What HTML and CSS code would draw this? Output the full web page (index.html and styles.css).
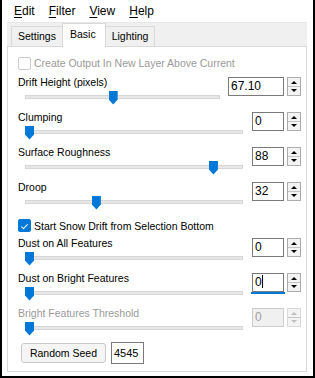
FILE: index.html
```html
<!DOCTYPE html>
<html lang="en">
<head>
  <meta charset="UTF-8" />
  <title>Snow Drift</title>
  <link rel="stylesheet" href="styles.css">
</head>
<body>
  <div class="window">

    <!-- Menu bar -->
    <div class="menubar">
      <span><u>E</u>dit</span>
      <span><u>F</u>ilter</span>
      <span><u>V</u>iew</span>
      <span><u>H</u>elp</span>
    </div>

    <!-- Tabs -->
    <div class="tabs">
      <div class="tab">Settings</div>
      <div class="tab active">Basic</div>
      <div class="tab">Lighting</div>
    </div>

    <div class="panel">
      <label class="check disabled"><span class="box"></span>Create Output In New Layer Above Current</label>

      <div class="row wide">
        <div class="label">Drift Height (pixels)</div>
        <div class="num"><span class="field">67.10</span><span class="spin"><i class="up"></i><i class="down"></i></span></div>
        <div class="slider"><div class="range"><span class="thumb" style="left: 45%"></span></div></div>
      </div>

      <div class="row">
        <div class="label">Clumping</div>
        <div class="num"><span class="field">0</span><span class="spin"><i class="up"></i><i class="down"></i></span></div>
        <div class="slider"><div class="range"><span class="thumb" style="left: 0%"></span></div></div>
      </div>

      <div class="row">
        <div class="label">Surface Roughness</div>
        <div class="num"><span class="field">88</span><span class="spin"><i class="up"></i><i class="down"></i></span></div>
        <div class="slider"><div class="range"><span class="thumb" style="left: 88%"></span></div></div>
      </div>

      <div class="row">
        <div class="label">Droop</div>
        <div class="num"><span class="field">32</span><span class="spin"><i class="up"></i><i class="down"></i></span></div>
        <div class="slider"><div class="range"><span class="thumb" style="left: 32%"></span></div></div>
      </div>

      <label class="check on">
        <span class="box">
          <svg width="13" height="13" viewBox="0 0 13 13"><path d="M2.8 6.6 L5.3 9 L10.2 4" fill="none" stroke="#fff" stroke-width="1.2"/></svg>
        </span>Start Snow Drift from Selection Bottom
      </label>

      <div class="row">
        <div class="label">Dust on All Features</div>
        <div class="num"><span class="field">0</span><span class="spin"><i class="up"></i><i class="down"></i></span></div>
        <div class="slider"><div class="range"><span class="thumb" style="left: 0%"></span></div></div>
      </div>

      <div class="row">
        <div class="label">Dust on Bright Features</div>
        <div class="num"><span class="field focus">0<span class="caret"></span></span><span class="spin"><i class="up"></i><i class="down"></i></span></div>
        <div class="slider"><div class="range"><span class="thumb" style="left: 0%"></span></div></div>
      </div>

      <div class="row off">
        <div class="label">Bright Features Threshold</div>
        <div class="num"><span class="field">0</span><span class="spin"><i class="up"></i><i class="down"></i></span></div>
        <div class="slider"><div class="range"><span class="thumb" style="left: 0%"></span></div></div>
      </div>

      <div class="seed">
        <button class="btn">Random Seed</button>
        <span class="seed-box">4545</span>
      </div>
    </div>
  </div>
</body>
</html>
```

FILE: styles.css
```css
/* ---------- Window frame ---------- */
body {
  margin: 0;
  font-family: "Liberation Sans", Arial, sans-serif;
  font-size: 10.5px;
  color: #000;
  background: #fff;
}

.window {
  width: 315px;
  height: 378px;
  box-sizing: border-box;
  border: 2px solid #000;
  border-top: none;
  background: #fff;
  padding: 0 6px 0 5px;
  overflow: hidden;
}

/* ---------- Menu ---------- */
.menubar {
  display: flex;
  gap: 14px;
  height: 22px;
  align-items: center;
  padding-left: 7px;
  font-size: 12px;
}
.menubar u { text-decoration-thickness: 1px; text-underline-offset: 2px; }

/* ---------- Tabs ---------- */
.tabs {
  display: flex;
  align-items: flex-end;
  height: 24px;
  background: #f0f0f0;
  border-top: 1px solid #e6e6e6;
  box-sizing: border-box;
  padding-left: 4px;
}
.tab {
  height: 19px;
  line-height: 19px;
  padding: 0 6px;
  border: 1px solid #d9d9d9;
  border-bottom: none;
  margin-right: -1px;
  background: #f0f0f0;
}
.tab.active {
  height: 23px;
  line-height: 20px;
  background: #fff;
  position: relative;
  z-index: 1;
  margin-bottom: -1px;
  padding: 0 9px 0 7px;
}

/* ---------- Tab page ---------- */
.panel {
  height: 326px;
  box-sizing: border-box;
  border: 1px solid #d9d9d9;
  padding: 8px 5px 0 10px;
}

.check {
  display: flex;
  align-items: center;
  gap: 3px;
  height: 16px;
}
.check .box {
  width: 13px;
  height: 13px;
  box-sizing: border-box;
  border: 1px solid #333;
  border-radius: 2px;
  display: flex;
}
.check.disabled { color: #9a9a9a; margin-bottom: 3.5px; }
.check.disabled .box { border-color: #cccccc; }
.check.on { margin: 3px 0 2px; }
.check.on .box { background: #0078d7; border-color: #0078d7; }

/* ---------- Slider rows ---------- */
.row {
  display: grid;
  grid-template-columns: 1fr 49px;
  grid-template-rows: 15px 20px;
  height: 35px;
}
.row .label {
  line-height: 15px;
}
.row .num {
  grid-column: 2;
  grid-row: 1 / 3;
  display: flex;
  gap: 3px;
  margin-top: 2.5px;
  height: 19px;
}
.row.wide { grid-template-columns: 1fr 73px; }
.row.wide .field { width: 56px; }
.row.wide .slider { margin-right: 8px; }

.field {
  width: 32px;
  height: 19px;
  box-sizing: border-box;
  border: 1px solid #7a7a7a;
  padding-left: 2px;
  font-size: 12px;
  line-height: 17px;
  background: #fff;
  position: relative;
}
.field.focus::after {
  content: "";
  position: absolute;
  left: -2px;
  right: -2px;
  bottom: -3px;
  height: 2px;
  background: #0078d7;
}
.caret {
  display: inline-block;
  width: 1px;
  height: 13px;
  background: #000;
  vertical-align: -2px;
}

.spin {
  width: 14px;
  height: 19px;
  box-sizing: border-box;
  border: 1px solid #adadad;
  display: flex;
  flex-direction: column;
  background: #f3f3f3;
}
.spin i {
  flex: 1;
  position: relative;
}
.spin i + i { border-top: 1px solid #c4c4c4; }
.spin i::after {
  content: "";
  position: absolute;
  left: 3px;
  top: 3px;
  border-left: 3px solid transparent;
  border-right: 3px solid transparent;
}
.spin .up::after { border-bottom: 3px solid #000; }
.spin .down::after { border-top: 3px solid #000; top: 2px; }

.slider {
  grid-row: 2;
  position: relative;
  margin: 5px 9px 0 7px;
  height: 4px;
  background: #e7e7e7;
  border: 1px solid #d6d6d6;
  box-sizing: border-box;
}
.range {
  position: absolute;
  left: -1px;
  right: 8px;
  top: 0;
  bottom: 0;
}
.thumb {
  position: absolute;
  top: -5px;
  width: 9px;
  height: 14px;
  background: #0078d7;
  clip-path: polygon(0 0, 100% 0, 100% 64%, 50% 100%, 0 64%);
}

.row.off .label { color: #9a9a9a; }
.row.off .field { background: #f0f0f0; border-color: #cccccc; color: #a0a0a0; }
.row.off .spin { border-color: #d9d9d9; }
.row.off .spin .up::after { border-bottom-color: #bfbfbf; }
.row.off .spin .down::after { border-top-color: #bfbfbf; }

/* ---------- Seed ---------- */
.seed {
  display: flex;
  align-items: center;
  gap: 5px;
  margin-top: 1px;
  padding-left: 3px;
}
.btn {
  width: 85px;
  height: 20px;
  font: inherit;
  border: 1px solid #c8c8c8;
  border-radius: 3px;
  background: #f5f5f5;
  padding: 0;
}
.seed-box {
  width: 33px;
  height: 22px;
  box-sizing: border-box;
  border: 1px solid #7a7a7a;
  font-size: 11px;
  line-height: 20px;
  padding-left: 2px;
}
```
